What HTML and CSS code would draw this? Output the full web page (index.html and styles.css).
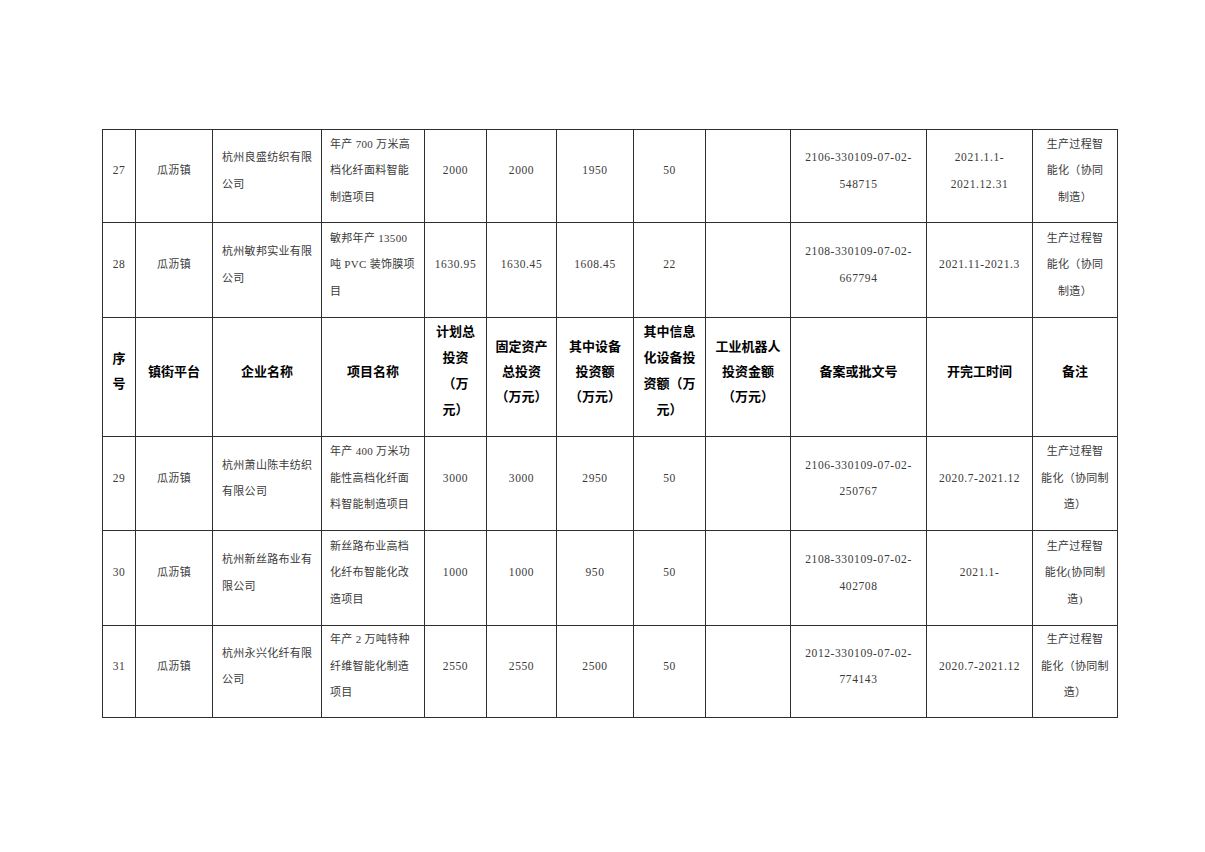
FILE: index.html
```html
<!DOCTYPE html>
<html lang="zh-CN">
<head>
<meta charset="utf-8">
<title>项目表</title>
<link rel="stylesheet" href="styles.css">
</head>
<body>
<div class="page">
<table class="sheet">
<colgroup>
<col class="c1"><col class="c2"><col class="c3"><col class="c4"><col class="c5"><col class="c6"><col class="c7"><col class="c8"><col class="c9"><col class="c10"><col class="c11"><col class="c12">
</colgroup>
<tbody>
<tr class="r27">
<td class="n">27</td>
<td class="t">瓜沥镇</td>
<td class="t left">杭州良盛纺织有限<br>公司</td>
<td class="t left">年产 700 万米高<br>档化纤面料智能<br>制造项目</td>
<td class="n">2000</td>
<td class="n">2000</td>
<td class="n">1950</td>
<td class="n">50</td>
<td class="n"></td>
<td class="n">2106-330109-07-02-<br>548715</td>
<td class="n">2021.1.1-<br>2021.12.31</td>
<td class="t">生产过程智<br>能化（协同<br>制造）</td>
</tr>
<tr class="r28">
<td class="n">28</td>
<td class="t">瓜沥镇</td>
<td class="t left">杭州敏邦实业有限<br>公司</td>
<td class="t left">敏邦年产 13500<br>吨 PVC 装饰膜项<br>目</td>
<td class="n">1630.95</td>
<td class="n">1630.45</td>
<td class="n">1608.45</td>
<td class="n">22</td>
<td class="n"></td>
<td class="n">2108-330109-07-02-<br>667794</td>
<td class="n">2021.11-2021.3</td>
<td class="t">生产过程智<br>能化（协同<br>制造）</td>
</tr>
<tr class="head">
<td>序<br>号</td>
<td>镇街平台</td>
<td>企业名称</td>
<td>项目名称</td>
<td class="tall">计划总<br>投资<br>（万<br>元）</td>
<td>固定资产<br>总投资<br>（万元）</td>
<td>其中设备<br>投资额<br>（万元）</td>
<td class="tall">其中信息<br>化设备投<br>资额（万<br>元）</td>
<td>工业机器人<br>投资金额<br>（万元）</td>
<td>备案或批文号</td>
<td>开完工时间</td>
<td>备注</td>
</tr>
<tr class="r29">
<td class="n">29</td>
<td class="t">瓜沥镇</td>
<td class="t left">杭州萧山陈丰纺织<br>有限公司</td>
<td class="t left">年产 400 万米功<br>能性高档化纤面<br>料智能制造项目</td>
<td class="n">3000</td>
<td class="n">3000</td>
<td class="n">2950</td>
<td class="n">50</td>
<td class="n"></td>
<td class="n">2106-330109-07-02-<br>250767</td>
<td class="n">2020.7-2021.12</td>
<td class="t">生产过程智<br>能化（协同制<br>造）</td>
</tr>
<tr class="r30">
<td class="n">30</td>
<td class="t">瓜沥镇</td>
<td class="t left">杭州新丝路布业有<br>限公司</td>
<td class="t left">新丝路布业高档<br>化纤布智能化改<br>造项目</td>
<td class="n">1000</td>
<td class="n">1000</td>
<td class="n">950</td>
<td class="n">50</td>
<td class="n"></td>
<td class="n">2108-330109-07-02-<br>402708</td>
<td class="n">2021.1-</td>
<td class="t">生产过程智<br>能化(协同制<br>造)</td>
</tr>
<tr class="r31">
<td class="n">31</td>
<td class="t">瓜沥镇</td>
<td class="t left">杭州永兴化纤有限<br>公司</td>
<td class="t left">年产 2 万吨特种<br>纤维智能化制造<br>项目</td>
<td class="n">2550</td>
<td class="n">2550</td>
<td class="n">2500</td>
<td class="n">50</td>
<td class="n"></td>
<td class="n">2012-330109-07-02-<br>774143</td>
<td class="n">2020.7-2021.12</td>
<td class="t">生产过程智<br>能化（协同制<br>造）</td>
</tr>
</tbody>
</table>
</div>
</body>
</html>
```

FILE: styles.css
```css
html, body {
  margin: 0;
  padding: 0;
  background: #ffffff;
}

.page {
  padding: 129px 0 0 102px;
}

.sheet {
  border-collapse: collapse;
  table-layout: fixed;
  width: 1016px;
}

.c1 { width: 33px; }
.c2 { width: 77px; }
.c3 { width: 109px; }
.c4 { width: 103px; }
.c5 { width: 62px; }
.c6 { width: 70px; }
.c7 { width: 77px; }
.c8 { width: 72px; }
.c9 { width: 85px; }
.c10 { width: 136px; }
.c11 { width: 106px; }
.c12 { width: 85px; }

.sheet td {
  border: 1px solid #2e2e2e;
  padding: 0 0 11px 0;
  text-align: center;
  vertical-align: middle;
  white-space: nowrap;
  overflow: hidden;
  color: #3a3a3a;
  line-height: 26.5px;
  box-sizing: border-box;
}

.sheet td.n {
  font-family: "Liberation Serif", "Noto Sans CJK SC", serif;
  font-size: 11.5px;
  letter-spacing: 0.6px;
}

.sheet td.t {
  font-family: "Liberation Serif", "Noto Sans CJK SC", serif;
  font-size: 11px;
  letter-spacing: 0.3px;
}

.sheet td.left {
  text-align: left;
  padding-left: 8px;
}

.sheet td:nth-child(3).left {
  padding-left: 9px;
}

.r27 td { height: 93px; }
.r28 td { height: 95px; }
.head td { height: 119px; }
.r29 td { height: 94px; }
.r30 td { height: 95px; }
.r31 td { height: 92px; }

.head td {
  font-family: "Noto Sans CJK SC", sans-serif;
  font-weight: bold;
  font-size: 13px;
  color: #000000;
  line-height: 25px;
  padding-bottom: 14px;
}

.head td.tall {
  line-height: 25.8px;
}
```
